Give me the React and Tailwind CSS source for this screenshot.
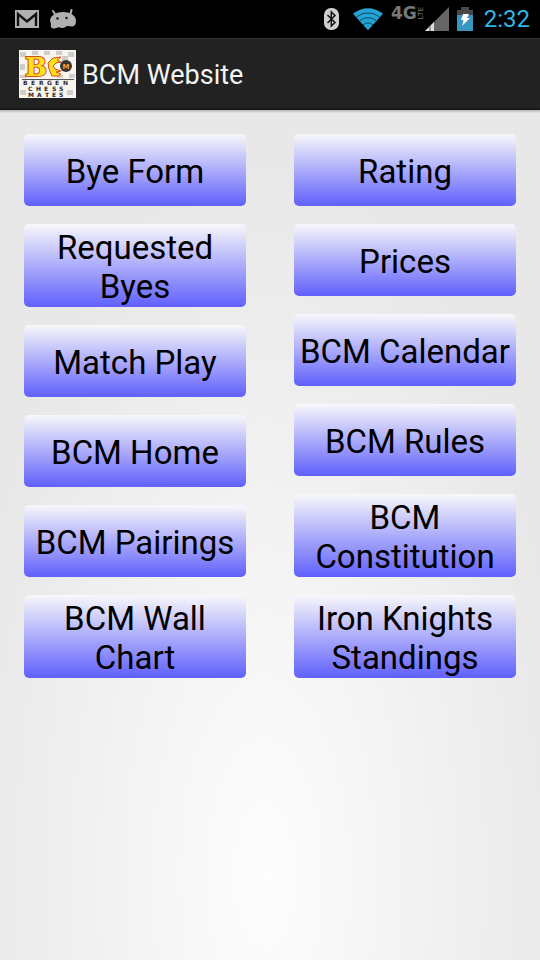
import React from "react";

const leftLinks = [
    "Bye Form",
    "Requested Byes",
    "Match Play",
    "BCM Home",
    "BCM Pairings",
    "BCM Wall Chart",
];

const rightLinks = [
    "Rating",
    "Prices",
    "BCM Calendar",
    "BCM Rules",
    "BCM Constitution",
    "Iron Knights Standings",
];

function MailIcon() {
    return (
        <svg width="24" height="18" viewBox="0 0 24 18" aria-hidden="true">
            <rect width="24" height="18" fill="#b0b0b0" />
            <path
                d="M3 16V4L12 11.500l9-7.500V16"
                fill="none"
                stroke="#111"
                strokeWidth="2.400"
            />
        </svg>
    );
}

function DroidIcon() {
    return (
        <svg width="26" height="20" viewBox="0 0 26 20" aria-hidden="true">
            <path
                d="M3 2L5.500 6M21.500 1L20.500 5"
                stroke="#b0b0b0"
                strokeWidth="2"
                strokeLinecap="round"
            />
            <path
                d="M0 11.500C1 6 6 3 13 3S25.500 6 26 11.500C26 15 25 17 22.500 17.500C20.500 17.800 18.500 16.300 16.500 17.300C14 19.300 11.500 19.500 9 18.300C8 18 7 19.500 4 19.500C1 19.500 .3 17 1 15.500Z"
                fill="#b0b0b0"
            />
            <circle cx="7.500" cy="9.500" r="1.200" fill="#111" />
            <circle cx="16.500" cy="9" r="1.200" fill="#111" />
        </svg>
    );
}

function BluetoothIcon() {
    return (
        <svg width="15" height="22" viewBox="0 0 15 22" aria-hidden="true">
            <rect width="15" height="22" rx="7" fill="#cfcfcf" />
            <path
                d="M3.500 7l7.500 7.500L7.300 18V4L11 7.500L3.500 15"
                fill="none"
                stroke="#111"
                strokeWidth="1.500"
            />
        </svg>
    );
}

function WifiIcon() {
    return (
        <svg width="30" height="24" viewBox="0 0 32 24" aria-hidden="true">
            <path d="M0 6.500C9-1.500 23-1.500 32 6.500L16 24Z" fill="#25a3d4" />
            <path
                d="M3 10.500C10.500 4 21.500 4 29 10.500M6.500 14.500C12 9.500 20 9.500 25.500 14.500M10.500 18.500C14 15.500 18 15.500 21.500 18.500"
                fill="none"
                stroke="#0b4155"
                strokeWidth="1"
            />
        </svg>
    );
}

function SignalIcon() {
    return (
        <svg width="24" height="24" viewBox="0 0 24 24" aria-hidden="true">
            <path d="M0 24L24 0V24Z" fill="#666" />
            <path d="M0 24L9 15V24Z" fill="#ddd" />
            <path d="M5 24V18.500" stroke="#555" />
        </svg>
    );
}

function BatteryIcon() {
    return (
        <svg width="16" height="24" viewBox="0 0 16 24" aria-hidden="true">
            <path d="M4 0h8v3h4v6H0V3h4Z" fill="#484848" />
            <path d="M0 8h16v16H0Z" fill="#3796bd" />
            <path d="M6 7h6l-2 4h3L5 19l1.500-6H4Z" fill="#fff" />
        </svg>
    );
}

function AppLogo() {
    return (
        <svg
            width="57"
            height="48"
            viewBox="0 0 57 48"
            role="img"
            aria-label="Bergen Chess Mates"
        >
            <rect width="57" height="48" fill="#f7f5ee" />
            <path
                d="M1 2h6v5H1ZM13 1h6v4h-6ZM25 1h6v4h-6ZM37 1h6v4h-6ZM49 2h6v5h-6ZM43 6h6v5h-6ZM1 14h5v6H1ZM1 25h6v3H1ZM38 25h6v3h-6ZM50 24h6v4h-6ZM48 40h6v5h-6ZM1 40h6v5H1Z"
                fill="#d0cec8"
            />
            <path
                d="M42 7L34 8L29 13L30 19L33 26L40 26L42 24L37 22L42 21L36 19L34 16L37 13L42 12L38 10.500Z"
                fill="#ffe21a"
                stroke="#d8481c"
                strokeWidth="1"
            />
            <text
                x="6"
                y="26"
                fontFamily="'DejaVu Serif', serif"
                fontWeight="700"
                fontSize="26"
                fill="#ffe21a"
                stroke="#d8481c"
                strokeWidth="2"
                paintOrder="stroke"
            >
                B
            </text>
            <circle cx="47" cy="16" r="6" fill="#3b3630" />
            <text
                x="47"
                y="19"
                textAnchor="middle"
                fontFamily="'DejaVu Sans', sans-serif"
                fontWeight="700"
                fontSize="7"
                fill="#f2a02c"
            >
                M
            </text>
            <path d="M3 29.500H55" stroke="#555" />
            <g
                fontFamily="'DejaVu Sans', sans-serif"
                fontWeight="700"
                fontSize="6"
                fill="#2b2b2b"
            >
                <text y="35" x="4 12 20 28 36 44">
                    BERGEN
                </text>
                <text y="41" x="9 17 25 33 40">
                    CHESS
                </text>
                <text y="47" x="9 18 26 33 40">
                    MATES
                </text>
            </g>
        </svg>
    );
}

function StatusBar() {
    return (
        <div className="flex h-[38px] items-center justify-between bg-black pr-[10px] pl-[15px]">
            <div className="flex items-center gap-[11px]">
                <MailIcon />
                <DroidIcon />
            </div>
            <div className="flex items-center">
                <BluetoothIcon />
                <div className="ml-[14px]">
                    <WifiIcon />
                </div>
                <div className="ml-2 flex h-6 items-start text-[#777]">
                    <span className="font-['DejaVu_Sans',sans-serif] text-[17px] leading-3 font-bold">
                        4G
                    </span>
                    <span className="rotate-180 text-[8px] leading-2 [writing-mode:vertical-rl]">
                        LTE
                    </span>
                </div>
                <SignalIcon />
                <div className="ml-2">
                    <BatteryIcon />
                </div>
                <span className="ml-[11px] text-2xl text-[#33b5e5]">2:32</span>
            </div>
        </div>
    );
}

function LinkColumn({ links }) {
    return (
        <div className="flex flex-col gap-[18px]">
            {links.map((label) => (
                <button
                    key={label}
                    type="button"
                    className="min-h-[72px] rounded-[5px] bg-linear-to-b/srgb from-[#f8f8fa] to-[#6060fc] px-1 pt-1 pb-px text-[33px] leading-[39px] text-black"
                >
                    {label}
                </button>
            ))}
        </div>
    );
}

function App() {
    return (
        <div className="flex min-h-screen flex-col bg-[#e8e8e8] font-[Roboto,sans-serif]">
            <StatusBar />
            <header className="flex h-[72px] items-center gap-[6px] border-t border-b-2 border-t-[#333] border-b-[#1a1a1a] bg-[#222] px-[19px]">
                <AppLogo />
                <h1 className="pt-[3px] text-[27px] text-[#f3f3f3]">
                    BCM Website
                </h1>
            </header>
            <div className="h-[3px] bg-linear-to-b from-[#b4b4b4] to-[#e6e6e6]" />
            <main className="grid flex-1 grid-cols-2 content-start gap-12 bg-[radial-gradient(56%_84%_at_49%_90%,#fdfdfd,#e8e8e8)] px-6 pt-[21px]">
                <LinkColumn links={leftLinks} />
                <LinkColumn links={rightLinks} />
            </main>
        </div>
    );
}

export default App;
